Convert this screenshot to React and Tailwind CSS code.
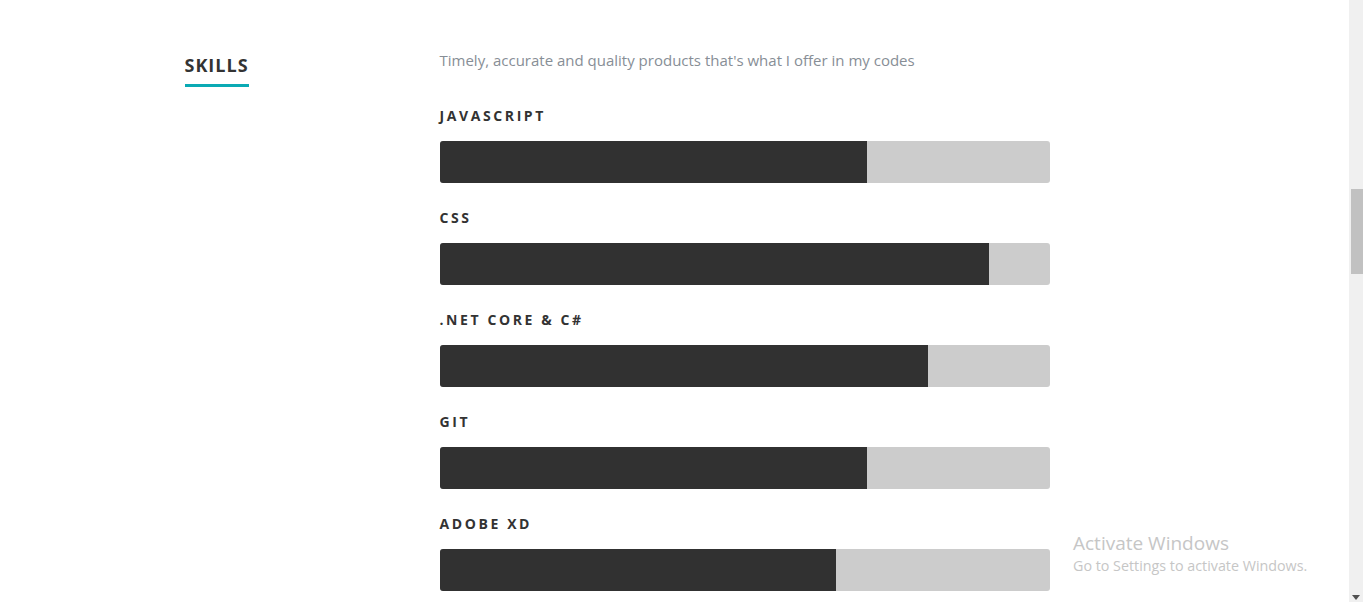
import React from "react";

const skills = [
  { name: "JAVASCRIPT", pct: 70 },
  { name: "CSS", pct: 90 },
  { name: ".NET CORE & C#", pct: 80 },
  { name: "GIT", pct: 70 },
  { name: "ADOBE XD", pct: 65 },
];

export default function App() {
  return (
    <div className="relative flex h-[602px] w-[1363px] overflow-hidden bg-white" style={{ fontFamily: '"Open Sans", sans-serif' }}>
      <div className="flex-1">
        <div className="mx-auto flex w-[980px] pt-[48px]">
          <div className="w-[255px] shrink-0 pt-[4px]">
            <h2 className="inline-block border-b-[3px] border-[#0aaab4] pb-[6px] text-[18px] font-bold leading-[26px] tracking-[1px] text-[#333]">
              SKILLS
            </h2>
          </div>
          <div className="w-[610px]">
            <p className="text-[15px] leading-[24px] text-[#878e96]">
              Timely, accurate and quality products that's what I offer in my codes
            </p>
            <div className="mt-[34px] flex flex-col gap-[25px]">
              {skills.map((s) => (
                <div key={s.name}>
                  <div className="text-[14px] font-bold leading-[20px] tracking-[2.6px] text-[#333]">{s.name}</div>
                  <div className="mt-[15px] h-[42px] w-full overflow-hidden rounded-[3px] bg-[#cccccc]">
                    <div className="h-full bg-[#313131]" style={{ width: `${s.pct}%` }} />
                  </div>
                </div>
              ))}
            </div>
          </div>
        </div>
      </div>
      <div className="relative flex h-full w-[14px] shrink-0 flex-col bg-[#f0f0f0]">
        <div className="ml-[2px] mt-[189px] h-[85px] w-[12px] bg-[#c1c1c1]" />
        <div className="mt-auto mb-[2px] flex justify-center">
          <svg width="8" height="5" viewBox="0 0 8 5"><path d="M0 0H8L4 5Z" fill="#505050" /></svg>
        </div>
      </div>
      <div className="absolute left-[1073px] top-[531px] text-[#c6c6c6]" style={{ fontFamily: '"Segoe UI", "Open Sans", sans-serif' }}>
        <div className="text-[19px] leading-[24px]">Activate Windows</div>
        <div className="text-[14.3px] leading-[21px]">Go to Settings to activate Windows.</div>
      </div>
    </div>
  );
}
